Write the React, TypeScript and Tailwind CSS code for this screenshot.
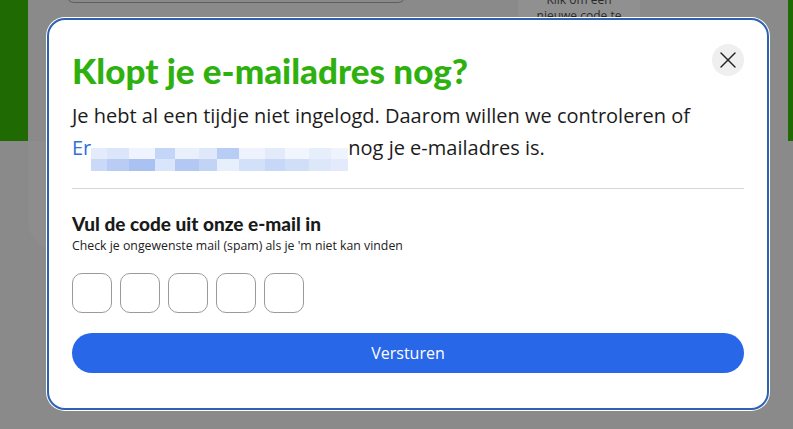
import { X } from "lucide-react";

const blurBlocks = [
  { w: 16, top: "#e4ecfb", bottom: "#c9d9f7" },
  { w: 22, top: "#dbe6fa", bottom: "#b9cdf4" },
  { w: 26, top: "#eef3fd", bottom: "#a9c2f2" },
  { w: 20, top: "#c4d6f7", bottom: "#d9e5fa" },
  { w: 24, top: "#e9f0fc", bottom: "#b3c9f3" },
  { w: 18, top: "#dfe8fb", bottom: "#c2d4f6" },
  { w: 22, top: "#b8cdf5", bottom: "#e8effc" },
  { w: 26, top: "#edf2fd", bottom: "#d3e0f9" },
  { w: 20, top: "#e3ebfb", bottom: "#c7d7f7" },
  { w: 24, top: "#f1f5fe", bottom: "#d0def8" },
  { w: 22, top: "#e6eefc", bottom: "#dde7fa" },
  { w: 17, top: "#eef3fd", bottom: "#e2eafb" },
];

function CodeInput() {
  return (
    <div className="h-10 w-10 rounded-[10px] border border-[#9a9a9a] bg-white" />
  );
}

export default function App() {
  return (
    <div className="relative h-[429px] w-[793px] overflow-hidden bg-[#8a8a8a] font-['Open_Sans',sans-serif]">
      {/* page behind the overlay */}
      <div className="flex h-[141px] bg-[#1f6a02]">
        <div className="ml-[28px] mr-[5px] flex flex-1 justify-between bg-[#8a8a8a] pl-[38px] pr-[148px]">
          <div className="-mt-[20px] h-[23px] w-[340px] rounded-b-[8px] border border-[#5e5e5e]" />
          <div className="-mt-[8px] flex h-[34px] w-[122px] flex-col items-center bg-[#909090] text-[12px] leading-[16px] text-[#2a2a2a]">
            <span>Klik om een</span>
            <span>nieuwe code te</span>
          </div>
        </div>
      </div>
      <div className="mx-[28px] -mt-px h-[110px] rounded-b-[28px] bg-[#8d8d8d]" />

      {/* modal */}
      <div className="absolute left-[47px] top-[18px] w-[722px] rounded-[18px] border-2 border-[#2e62b0] bg-white px-[23px] pb-[35px] pt-[28px] shadow-[0_0_0_1px_#ffffff]">
        <button className="absolute right-[23px] top-[24px] flex h-8 w-8 items-center justify-center rounded-full bg-[#efefef] text-[#222]">
          <X size={28} strokeWidth={1.2} />
        </button>
        <h2 className="font-['Lato',sans-serif] text-[35px] font-black leading-[44px] text-[#2eb10e]">
          Klopt je e-mailadres nog?
        </h2>
        <p className="mt-[8px] text-[20px] leading-[32px] text-[#1c1c1c]">
          Je hebt al een tijdje niet ingelogd. Daarom willen we controleren of
          <br />
          <span className="text-[#2f6fd6]">Er</span>
          <span className="inline-flex h-[23px] translate-y-[4px] align-baseline">
            {blurBlocks.map((b, i) => (
              <span
                key={i}
                className="flex h-full flex-col"
                style={{ width: b.w }}
              >
                <span className="flex-1" style={{ background: b.top }} />
                <span className="flex-1" style={{ background: b.bottom }} />
              </span>
            ))}
          </span>
          nog je e-mailadres is.
        </p>
        <div className="mt-[21px] h-px bg-[#d6d6d6]" />

        <h3 className="mt-[23px] font-['Lato',sans-serif] text-[19px] font-black leading-[24px] text-[#1a1a1a]">
          Vul de code uit onze e-mail in
        </h3>
        <p className="mt-[2px] text-[12.3px] leading-[16px] text-[#222]">
          Check je ongewenste mail (spam) als je 'm niet kan vinden
        </p>

        <div className="mt-[19px] flex gap-2">
          <CodeInput />
          <CodeInput />
          <CodeInput />
          <CodeInput />
          <CodeInput />
        </div>

        <button className="mt-[20px] flex h-10 w-full items-center justify-center rounded-full bg-[#2767e8] text-[16px] text-white">
          Versturen
        </button>
      </div>
    </div>
  );
}
